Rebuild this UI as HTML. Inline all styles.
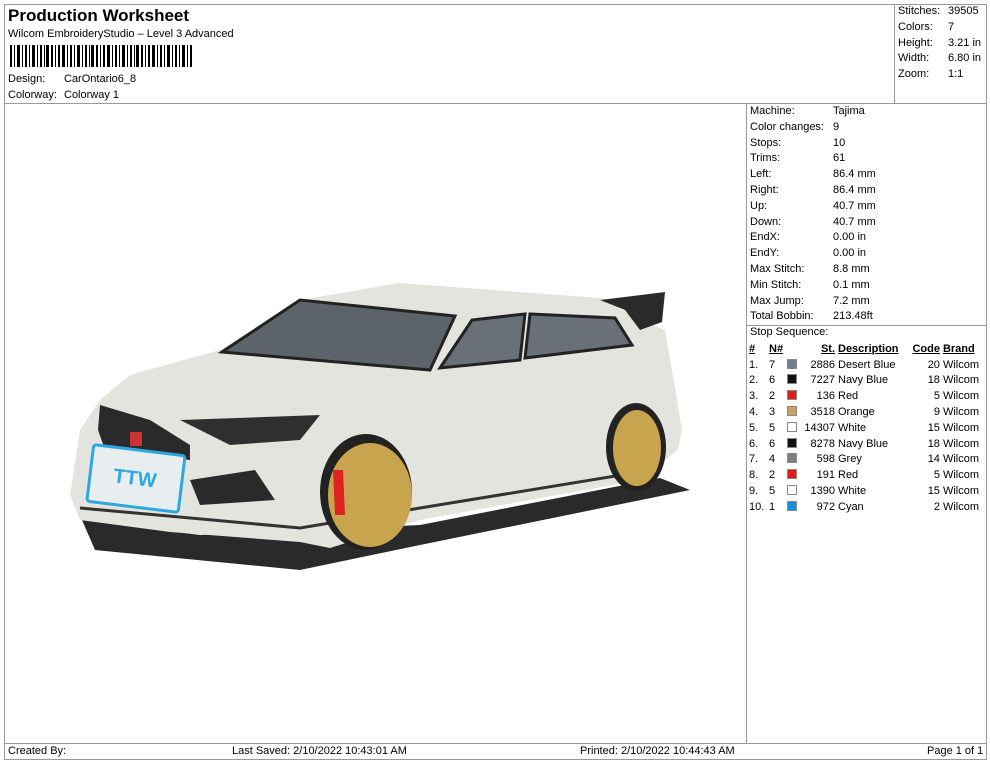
<!DOCTYPE html>
<html><head><meta charset="utf-8"><style>
*{margin:0;padding:0;box-sizing:border-box}
body{width:990px;height:762px;background:#fff;font-family:"Liberation Sans",Arial,sans-serif;color:#000;position:relative;overflow:hidden}
.abs{position:absolute}
.t{font-size:11px;line-height:15.8px;white-space:nowrap}
table{border-collapse:collapse;font-size:11px}
td{padding:0;height:15.8px;white-space:nowrap}
.sw{display:inline-block;width:10px;height:10px;border:1px solid #888;vertical-align:-1px}
</style></head><body>
<div class="abs" style="left:4px;top:4px;width:983px;height:756px;border:1px solid #999"></div>
<div class="abs" style="left:4px;top:103px;width:983px;border-top:1px solid #999"></div>
<div class="abs" style="left:894px;top:4px;height:99px;border-left:1px solid #999"></div>
<div class="abs" style="left:746px;top:103px;height:640px;border-left:1px solid #999"></div>
<div class="abs" style="left:746px;top:325px;width:241px;border-top:1px solid #999"></div>
<div class="abs" style="left:4px;top:743px;width:983px;border-top:1px solid #999"></div>

<div class="abs" style="left:8px;top:6px;font-size:17px;font-weight:bold">Production Worksheet</div>
<div class="abs t" style="left:8px;top:27px">Wilcom EmbroideryStudio – Level 3 Advanced</div>
<svg class="abs" style="left:10px;top:45px" width="185" height="22">
<g fill="#000">
<rect x="0" width="2" height="22"/><rect x="4" width="1" height="22"/><rect x="7" width="3" height="22"/><rect x="12" width="1" height="22"/><rect x="15" width="2" height="22"/><rect x="19" width="1" height="22"/><rect x="22" width="3" height="22"/><rect x="27" width="1" height="22"/><rect x="30" width="2" height="22"/><rect x="34" width="1" height="22"/><rect x="36" width="3" height="22"/><rect x="41" width="2" height="22"/><rect x="45" width="1" height="22"/><rect x="48" width="2" height="22"/><rect x="52" width="3" height="22"/><rect x="57" width="1" height="22"/><rect x="60" width="2" height="22"/><rect x="64" width="1" height="22"/><rect x="67" width="3" height="22"/><rect x="72" width="1" height="22"/><rect x="75" width="2" height="22"/><rect x="79" width="1" height="22"/><rect x="81" width="3" height="22"/><rect x="86" width="2" height="22"/><rect x="90" width="1" height="22"/><rect x="93" width="2" height="22"/><rect x="97" width="3" height="22"/><rect x="102" width="1" height="22"/><rect x="105" width="2" height="22"/><rect x="109" width="1" height="22"/><rect x="112" width="3" height="22"/><rect x="117" width="1" height="22"/><rect x="120" width="2" height="22"/><rect x="124" width="1" height="22"/><rect x="126" width="3" height="22"/><rect x="131" width="2" height="22"/><rect x="135" width="1" height="22"/><rect x="138" width="2" height="22"/><rect x="142" width="3" height="22"/><rect x="147" width="1" height="22"/><rect x="150" width="2" height="22"/><rect x="154" width="1" height="22"/><rect x="157" width="3" height="22"/><rect x="162" width="1" height="22"/><rect x="165" width="2" height="22"/><rect x="169" width="1" height="22"/><rect x="172" width="3" height="22"/><rect x="177" width="1" height="22"/><rect x="180" width="2" height="22"/>
</g></svg>
<div class="abs t" style="left:8px;top:72px">Design:</div><div class="abs t" style="left:64px;top:72px">CarOntario6_8</div>
<div class="abs t" style="left:8px;top:88px">Colorway:</div><div class="abs t" style="left:64px;top:88px">Colorway 1</div>

<div class="abs t" style="left:898px;top:4px">Stitches:<br>Colors:<br>Height:<br>Width:<br>Zoom:</div>
<div class="abs t" style="left:948px;top:4px">39505<br>7<br>3.21 in<br>6.80 in<br>1:1</div>

<div class="abs t" style="left:750px;top:104px">Machine:<br>Color changes:<br>Stops:<br>Trims:<br>Left:<br>Right:<br>Up:<br>Down:<br>EndX:<br>EndY:<br>Max Stitch:<br>Min Stitch:<br>Max Jump:<br>Total Bobbin:</div>
<div class="abs t" style="left:833px;top:104px">Tajima<br>9<br>10<br>61<br>86.4 mm<br>86.4 mm<br>40.7 mm<br>40.7 mm<br>0.00 in<br>0.00 in<br>8.8 mm<br>0.1 mm<br>7.2 mm<br>213.48ft</div>
<div class="abs t" style="left:750px;top:325px">Stop Sequence:</div>
<table class="abs" style="left:749px;top:341px;width:236px">
<tr style="font-weight:bold;text-decoration:underline"><td style="width:20px">#</td><td style="width:18px">N#</td><td style="width:14px"></td><td style="text-align:right;width:34px">St.</td><td style="padding-left:3px">Description</td><td style="text-align:right">Code</td><td style="padding-left:3px">Brand</td></tr>
<tr><td>1.</td><td>7</td><td><span class="sw" style="background:#6e7c96"></span></td><td align="right">2886</td><td style="padding-left:3px">Desert Blue</td><td align="right">20</td><td style="padding-left:3px">Wilcom</td></tr>
<tr><td>2.</td><td>6</td><td><span class="sw" style="background:#111"></span></td><td align="right">7227</td><td style="padding-left:3px">Navy Blue</td><td align="right">18</td><td style="padding-left:3px">Wilcom</td></tr>
<tr><td>3.</td><td>2</td><td><span class="sw" style="background:#e01b1b"></span></td><td align="right">136</td><td style="padding-left:3px">Red</td><td align="right">5</td><td style="padding-left:3px">Wilcom</td></tr>
<tr><td>4.</td><td>3</td><td><span class="sw" style="background:#c9a062"></span></td><td align="right">3518</td><td style="padding-left:3px">Orange</td><td align="right">9</td><td style="padding-left:3px">Wilcom</td></tr>
<tr><td>5.</td><td>5</td><td><span class="sw" style="background:#fff"></span></td><td align="right">14307</td><td style="padding-left:3px">White</td><td align="right">15</td><td style="padding-left:3px">Wilcom</td></tr>
<tr><td>6.</td><td>6</td><td><span class="sw" style="background:#111"></span></td><td align="right">8278</td><td style="padding-left:3px">Navy Blue</td><td align="right">18</td><td style="padding-left:3px">Wilcom</td></tr>
<tr><td>7.</td><td>4</td><td><span class="sw" style="background:#808080"></span></td><td align="right">598</td><td style="padding-left:3px">Grey</td><td align="right">14</td><td style="padding-left:3px">Wilcom</td></tr>
<tr><td>8.</td><td>2</td><td><span class="sw" style="background:#e01b1b"></span></td><td align="right">191</td><td style="padding-left:3px">Red</td><td align="right">5</td><td style="padding-left:3px">Wilcom</td></tr>
<tr><td>9.</td><td>5</td><td><span class="sw" style="background:#fff"></span></td><td align="right">1390</td><td style="padding-left:3px">White</td><td align="right">15</td><td style="padding-left:3px">Wilcom</td></tr>
<tr><td>10.</td><td>1</td><td><span class="sw" style="background:#1a8fd8"></span></td><td align="right">972</td><td style="padding-left:3px">Cyan</td><td align="right">2</td><td style="padding-left:3px">Wilcom</td></tr>
</table>

<svg class="abs" style="left:0;top:0" width="746" height="740">
<path d="M82 520 L95 550 L300 570 L420 545 L690 490 L660 478 L420 525 L200 535 Z" fill="#2a2a2a"/>
<path d="M70 495 L80 430 L100 400 L130 375 L220 350 L300 300 L400 283 L600 298 L640 320 L665 330 L672 370 L682 430 L678 450 L640 480 L420 520 L330 548 L300 542 L170 532 L80 520 Z" fill="#e4e4de"/>
<path d="M222 352 L300 300 L455 316 L430 370 Z" fill="#5d636a" stroke="#222" stroke-width="3"/>
<path d="M440 368 L472 320 L525 314 L520 360 Z" fill="#6a7078" stroke="#222" stroke-width="3"/>
<path d="M530 314 L615 318 L632 345 L525 358 Z" fill="#6a7078" stroke="#222" stroke-width="3"/>
<path d="M600 300 L665 292 L662 322 L640 330 L625 310 Z" fill="#2a2a2a"/>
<path d="M100 405 L150 420 L190 445 L190 460 L105 450 L98 430 Z" fill="#2a2a2a"/>
<path d="M180 420 L320 415 L300 440 L230 445 Z" fill="#2f2f2f"/>
<path d="M190 480 L255 470 L275 500 L200 505 Z" fill="#2a2a2a"/>
<path d="M80 508 L300 528 L420 508 L640 472" fill="none" stroke="#333" stroke-width="3"/>
<rect x="90" y="450" width="92" height="57" rx="3" fill="#e8eef0" stroke="#2ba8e0" stroke-width="3" transform="rotate(7 136 478)"/>
<text x="135" y="485" font-family="Liberation Sans" font-size="20" font-weight="bold" fill="#2ba8e0" text-anchor="middle" transform="rotate(7 136 478)">TTW</text>
<rect x="130" y="432" width="12" height="14" fill="#c33"/>
<ellipse cx="366" cy="492" rx="46" ry="58" fill="#222"/>
<ellipse cx="370" cy="495" rx="42" ry="52" fill="#c9a44e"/>
<path d="M333 470 L343 470 L345 515 L335 515 Z" fill="#d22"/>
<ellipse cx="636" cy="447" rx="30" ry="44" fill="#222"/>
<ellipse cx="637" cy="448" rx="24" ry="38" fill="#c9a44e"/>
</svg>

<div class="abs t" style="left:8px;top:744px">Created By:</div>
<div class="abs t" style="left:232px;top:744px">Last Saved: 2/10/2022 10:43:01 AM</div>
<div class="abs t" style="left:580px;top:744px">Printed: 2/10/2022 10:44:43 AM</div>
<div class="abs t" style="left:927px;top:744px">Page 1 of 1</div>
</body></html>
